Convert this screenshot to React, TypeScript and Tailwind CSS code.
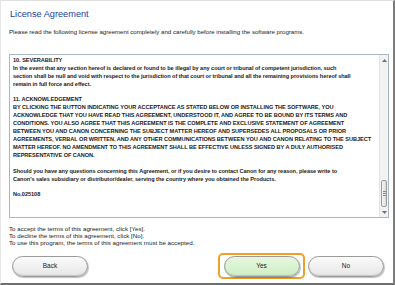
const agreementLines: { text: string; gap?: number }[] = [
  { text: '10.  SEVERABILITY' },
  { text: 'In the event that any section hereof is declared or found to be illegal by any court or tribunal of competent jurisdiction, such' },
  { text: 'section shall be null and void with respect to the jurisdiction of that court or tribunal and all the remaining provisions hereof shall' },
  { text: 'remain in full force and effect.' },
  { text: '11.  ACKNOWLEDGEMENT', gap: 7 },
  { text: 'BY CLICKING THE BUTTON INDICATING YOUR ACCEPTANCE AS STATED BELOW OR INSTALLING THE SOFTWARE, YOU' },
  { text: 'ACKNOWLEDGE THAT YOU HAVE READ THIS AGREEMENT, UNDERSTOOD IT, AND AGREE TO BE BOUND BY ITS TERMS AND' },
  { text: 'CONDITIONS.  YOU ALSO AGREE THAT THIS AGREEMENT IS THE COMPLETE AND EXCLUSIVE STATEMENT OF AGREEMENT' },
  { text: 'BETWEEN YOU AND CANON CONCERNING THE SUBJECT MATTER HEREOF AND SUPERSEDES ALL PROPOSALS OR PRIOR' },
  { text: 'AGREEMENTS, VERBAL OR WRITTEN, AND ANY OTHER COMMUNICATIONS BETWEEN YOU AND CANON RELATING TO THE SUBJECT' },
  { text: 'MATTER HEREOF.  NO AMENDMENT TO THIS AGREEMENT SHALL BE EFFECTIVE UNLESS SIGNED BY A DULY AUTHORISED' },
  { text: 'REPRESENTATIVE OF CANON.' },
  { text: 'Should you have any questions concerning this Agreement, or if you desire to contact Canon for any reason, please write to', gap: 8 },
  { text: "Canon's sales subsidiary or distributor/dealer, serving the country where you obtained the Products." },
  { text: 'No.025108', gap: 7 },
];

const Scrollbar = () => (
  <div className="flex w-[9px] flex-col border-l border-[#e4e4e4] bg-[#f2f2f2]">
    <div className="flex h-[10px] items-center justify-center">
      <svg width="5" height="3" viewBox="0 0 5 3">
        <path d="M0 3 L2.5 0 L5 3 Z" fill="#707070" />
      </svg>
    </div>
    <div className="flex-1" />
    <div className="mx-[1px] flex h-[27px] flex-col items-center justify-center gap-[1px] rounded-[2px] border border-[#9c9c9c] bg-gradient-to-r from-[#f4f4f4] to-[#dcdcdc]">
      <div className="h-px w-[3px] bg-[#8a8a8a]" />
      <div className="h-px w-[3px] bg-[#8a8a8a]" />
      <div className="h-px w-[3px] bg-[#8a8a8a]" />
    </div>
    <div className="flex h-[10px] items-center justify-center">
      <svg width="5" height="3" viewBox="0 0 5 3">
        <path d="M0 0 L2.5 3 L5 0 Z" fill="#707070" />
      </svg>
    </div>
  </div>
);

const PillButton = ({ label, green }: { label: string; green?: boolean }) => (
  <button
    className={
      'flex h-[21px] w-[76px] items-center justify-center rounded-full border border-[#9a9a9a] text-[6.5px] text-[#222] shadow-[inset_0_-1px_1px_rgba(0,0,0,0.15),1px_1px_1px_rgba(0,0,0,0.25)] ' +
      (green
        ? 'bg-gradient-to-b from-[#e6f7e0] to-[#cdeec3]'
        : 'bg-gradient-to-b from-[#fbfbfb] to-[#e6e6e6]')
    }
  >
    {label}
  </button>
);

const App = () => {
  return (
    <div
      className="flex h-[285px] w-[395px] flex-col overflow-hidden border-t border-l border-t-[#e0e0e0] border-l-[#e6e6e6] border-r-2 border-b-2 border-r-[#7c7c7c] border-b-[#6e6e6e] bg-white"
      style={{ fontFamily: '"Liberation Sans", Arial, sans-serif' }}
    >
      <h1 className="ml-[9px] mt-[7px] text-[9.2px] leading-[12px] text-[#1b3f9a]">License Agreement</h1>
      <p className="ml-[8px] mt-[8px] text-[6.1px] leading-[8px] text-[#222]">
        Please read the following license agreement completely and carefully before installing the software programs.
      </p>

      <div className="ml-[8px] mt-[18px] flex h-[164px] w-[380px] border border-[#a9b6c6] bg-white">
        <div className="flex-1 overflow-hidden pl-[3px] pt-[1px] text-[5.6px] font-bold leading-[8px] tracking-[-0.05px] text-[#1a1a1a]">
          {agreementLines.map((l, i) => (
            <div key={i} className="whitespace-nowrap" style={l.gap ? { marginTop: l.gap } : undefined}>
              {l.text}
            </div>
          ))}
        </div>
        <Scrollbar />
      </div>

      <div className="ml-[8px] mt-[7px] text-[6.2px] leading-[7px] text-[#222]">
        <p>To accept the terms of this agreement, click [Yes].</p>
        <p>To decline the terms of this agreement, click [No].</p>
        <p>To use this program, the terms of this agreement must be accepted.</p>
      </div>

      <div className="mt-[7px] flex items-center pl-[11px] pr-[9px]">
        <PillButton label="Back" />
        <div className="flex-1" />
        <div className="flex h-[26px] w-[87px] items-center justify-center rounded-[5px] border-2 border-[#f0a028]">
          <PillButton label="Yes" green />
        </div>
        <div className="ml-[3px]">
          <PillButton label="No" />
        </div>
      </div>
    </div>
  );
};

export default App;
